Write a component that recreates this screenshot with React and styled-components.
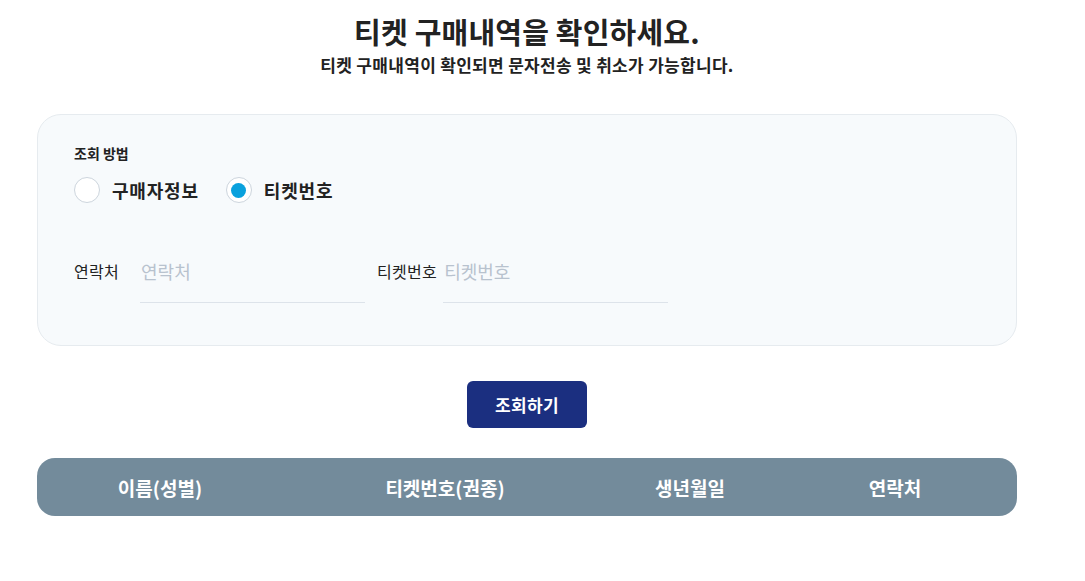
import React from "react";
import styled, { createGlobalStyle } from "styled-components";

const GlobalStyle = createGlobalStyle`
  body {
    margin: 0;
    background: #fff;
    font-family: "Noto Sans CJK KR", "Noto Sans", sans-serif;
    color: #222;
  }
  * {
    box-sizing: border-box;
  }
`;

const Page = styled.div`
  width: 980px;
  margin-left: 37px;
  padding-top: 12px;
`;

const Heading = styled.div`
  text-align: center;
  h1 {
    margin: 0;
    font-size: 29px;
    line-height: 38px;
    font-weight: 700;
    color: #222;
    letter-spacing: 0.2px;
  }
  p {
    margin: 3px 0 0;
    font-size: 17px;
    line-height: 24px;
    font-weight: 700;
    color: #222;
    letter-spacing: 0.3px;
  }
`;

const Card = styled.div`
  margin-top: 37px;
  height: 232px;
  background: #f7fafc;
  border: 1px solid #e6ebef;
  border-radius: 24px;
  padding: 28px 36px;
`;

const SectionLabel = styled.div`
  font-size: 14px;
  line-height: 20px;
  font-weight: 700;
  color: #222;
`;

const RadioGroup = styled.div`
  display: flex;
  gap: 27px;
  margin-top: 14px;
`;

const RadioItem = styled.label`
  display: flex;
  align-items: center;
  gap: 12px;
  font-size: 18px;
  font-weight: 700;
  color: #222;
  letter-spacing: 0.8px;
`;

const RadioCircle = styled.span`
  width: 26px;
  height: 26px;
  border-radius: 50%;
  border: 1px solid #cdd5dd;
  background: #fff;
  display: flex;
  align-items: center;
  justify-content: center;
  &::after {
    content: "";
    width: 15px;
    height: 15px;
    border-radius: 50%;
    background: ${(p) => (p.$checked ? "#0aa1dd" : "transparent")};
  }
`;

const FieldRow = styled.div`
  display: flex;
  align-items: flex-start;
  gap: 12px;
  margin-top: 49px;
`;

const Field = styled.div`
  display: flex;
  align-items: flex-start;
  gap: ${(p) => p.$gap}px;
`;

const FieldLabel = styled.span`
  font-size: 16px;
  line-height: 22px;
  color: #222;
  padding-top: 8px;
  letter-spacing: 0.3px;
`;

const Input = styled.input`
  width: 225px;
  height: 51px;
  border: none;
  border-bottom: 1px solid #dde3ea;
  background: transparent;
  font-family: inherit;
  font-size: 18px;
  padding: 0 1px 13px;
  outline: none;
  &::placeholder {
    color: #b8c2ce;
  }
`;

const ButtonRow = styled.div`
  display: flex;
  justify-content: center;
  margin-top: 35px;
`;

const SearchButton = styled.button`
  width: 120px;
  height: 47px;
  border: none;
  border-radius: 6px;
  background: #1b2f80;
  color: #fff;
  font-family: inherit;
  font-size: 17px;
  font-weight: 700;
  letter-spacing: 0.3px;
`;

const TableHead = styled.div`
  margin-top: 30px;
  height: 58px;
  background: #738b9b;
  border-radius: 18px;
  display: grid;
  grid-template-columns: 246px 324px 166px 1fr;
  align-items: center;
  color: #fff;
  font-size: 19px;
  font-weight: 700;
  span {
    text-align: center;
  }
`;

export default function App() {
  return (
    <>
      <GlobalStyle />
      <Page>
        <Heading>
          <h1>티켓 구매내역을 확인하세요.</h1>
          <p>티켓 구매내역이 확인되면 문자전송 및 취소가 가능합니다.</p>
        </Heading>
        <Card>
          <SectionLabel>조회 방법</SectionLabel>
          <RadioGroup>
            <RadioItem>
              <RadioCircle />
              구매자정보
            </RadioItem>
            <RadioItem>
              <RadioCircle $checked />
              티켓번호
            </RadioItem>
          </RadioGroup>
          <FieldRow>
            <Field $gap={21}>
              <FieldLabel>연락처</FieldLabel>
              <Input placeholder="연락처" />
            </Field>
            <Field $gap={6}>
              <FieldLabel>티켓번호</FieldLabel>
              <Input placeholder="티켓번호" />
            </Field>
          </FieldRow>
        </Card>
        <ButtonRow>
          <SearchButton>조회하기</SearchButton>
        </ButtonRow>
        <TableHead>
          <span>이름(성별)</span>
          <span>티켓번호(권종)</span>
          <span>생년월일</span>
          <span>연락처</span>
        </TableHead>
      </Page>
    </>
  );
}
